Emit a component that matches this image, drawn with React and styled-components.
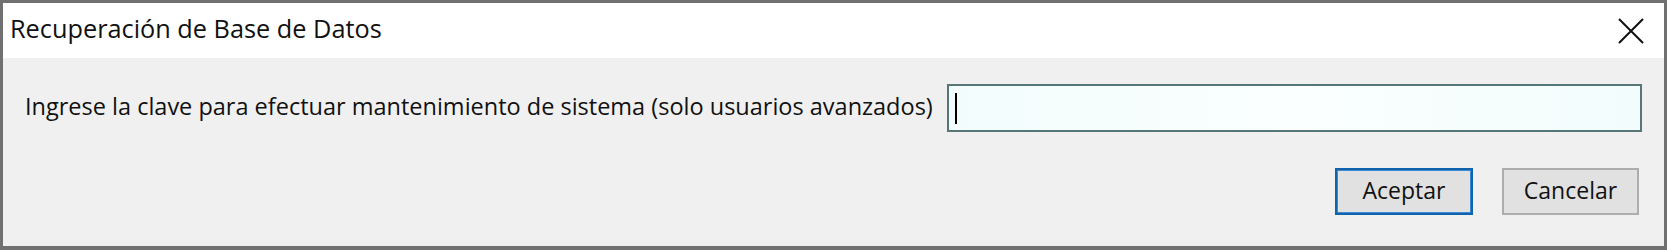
import React from "react";
import styled, { createGlobalStyle } from "styled-components";

const Global = createGlobalStyle`
  html, body { margin: 0; padding: 0; background: #f0f0f0; }
  * { box-sizing: border-box; }
`;

const Window = styled.div`
  width: 1667px;
  height: 250px;
  display: flex;
  flex-direction: column;
  border: 3px solid #707070;
  border-bottom-width: 4px;
  background: #f0f0f0;
  font-family: "Open Sans", "Noto Sans", sans-serif;
  color: #111;
`;

const TitleBar = styled.div`
  height: 55px;
  flex: none;
  display: flex;
  align-items: center;
  justify-content: space-between;
  background: #ffffff;
  padding: 0 20px 0 7px;
`;

const Title = styled.span`
  font-size: 25.3px;
  line-height: 1;
  padding-bottom: 3px;
`;

const CloseButton = styled.button`
  border: 0;
  background: transparent;
  padding: 0;
  width: 27px;
  height: 27px;
  display: flex;
  align-items: center;
  justify-content: center;
  cursor: pointer;
`;

const Body = styled.div`
  flex: 1;
  display: flex;
  flex-direction: column;
  padding: 26px 22px 0 22px;
`;

const Row = styled.div`
  display: flex;
  align-items: center;
  gap: 14px;
`;

const Label = styled.label`
  font-size: 23.5px;
  white-space: nowrap;
  padding-bottom: 4px;
`;

const Input = styled.div`
  flex: 1;
  height: 48px;
  border: 2px solid #557777;
  background: linear-gradient(90deg, #f2fcfc, #fbffff 50%, #f2fcfc);
  display: flex;
  align-items: center;
  padding-left: 6px;
`;

const Caret = styled.span`
  width: 2px;
  height: 31px;
  background: #000;
`;

const Footer = styled.div`
  display: flex;
  justify-content: flex-end;
  gap: 29px;
  margin-top: 36px;
  padding-right: 3px;
`;

const Button = styled.button`
  width: ${(p) => p.$w}px;
  height: 47px;
  background: #e1e1e1;
  border: 2px solid ${(p) => (p.$primary ? "#0f63ad" : "#adadad")};
  box-shadow: ${(p) => (p.$primary ? "inset 0 0 0 1px #3c8ad2" : "none")};
  font-family: "Open Sans", "Noto Sans", sans-serif;
  font-size: 23px;
  color: #111;
  padding: 0 0 3px 0;
  cursor: pointer;
`;

export default function App() {
  return (
    <>
      <Global />
      <Window>
        <TitleBar>
          <Title>Recuperación de Base de Datos</Title>
          <CloseButton aria-label="Cerrar">
            <svg width="26" height="26" viewBox="0 0 26 26">
              <path d="M1 1 L25 25 M25 1 L1 25" stroke="#111" strokeWidth="2" fill="none" />
            </svg>
          </CloseButton>
        </TitleBar>
        <Body>
          <Row>
            <Label>Ingrese la clave para efectuar mantenimiento de sistema (solo usuarios avanzados)</Label>
            <Input>
              <Caret />
            </Input>
          </Row>
          <Footer>
            <Button $primary $w={138}>Aceptar</Button>
            <Button $w={137}>Cancelar</Button>
          </Footer>
        </Body>
      </Window>
    </>
  );
}
